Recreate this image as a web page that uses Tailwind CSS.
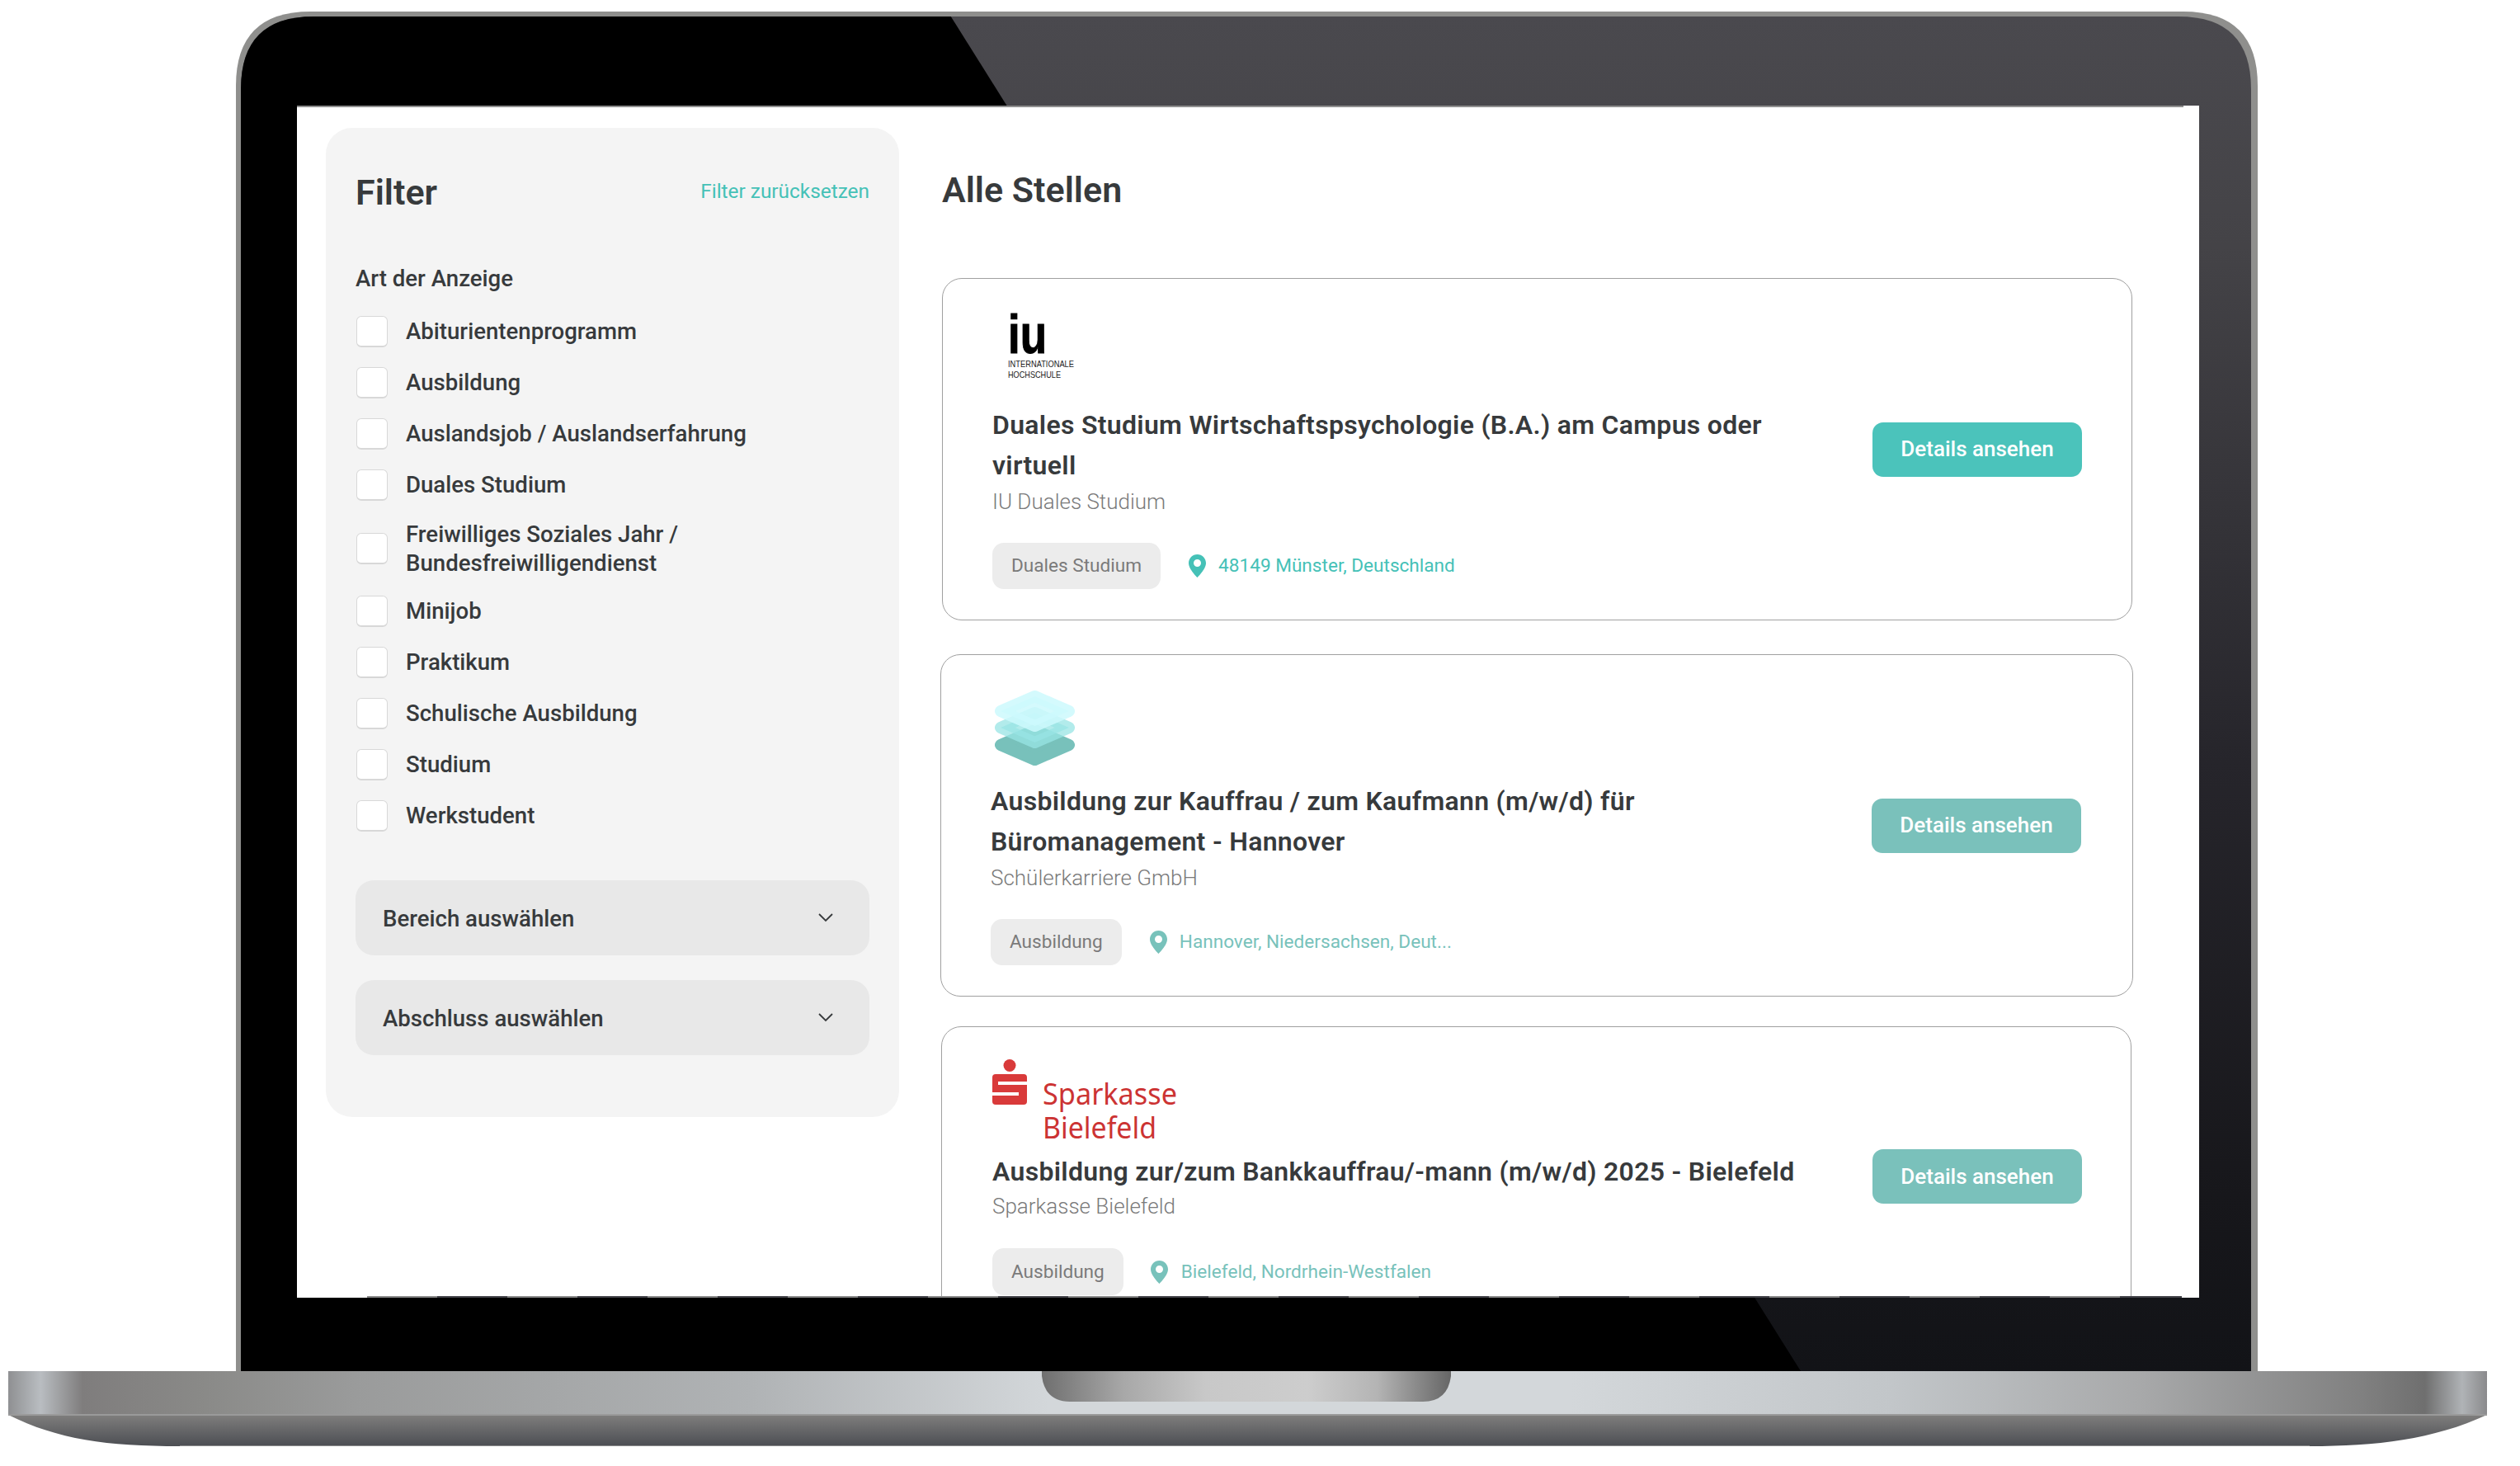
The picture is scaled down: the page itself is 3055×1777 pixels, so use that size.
<!DOCTYPE html>
<html lang="de">
<head>
<meta charset="utf-8">
<title>Alle Stellen</title>
<script src="https://cdn.jsdelivr.net/npm/@tailwindcss/browser@4"></script>
</head>
<body class="bg-white">
<div class="relative w-[3055px] h-[1777px] overflow-hidden bg-white font-[Roboto,sans-serif] text-[#373a3c]">

  <!-- laptop body -->
  <svg class="absolute inset-0" width="3055" height="1777" viewBox="0 0 3055 1777" xmlns="http://www.w3.org/2000/svg">
    <defs>
      <linearGradient id="lidShade" gradientUnits="userSpaceOnUse" x1="0" y1="20" x2="0" y2="1662">
        <stop offset="0" stop-color="#4a494e"/>
        <stop offset="0.17" stop-color="#444347"/>
        <stop offset="0.55" stop-color="#26252b"/>
        <stop offset="0.87" stop-color="#17171b"/>
        <stop offset="1" stop-color="#121317"/>
      </linearGradient>
      <linearGradient id="baseTop" gradientUnits="userSpaceOnUse" x1="10" y1="0" x2="3015" y2="0">
        <stop offset="0" stop-color="#8f9092"/>
        <stop offset="0.013" stop-color="#b9bdc1"/>
        <stop offset="0.03" stop-color="#7f7d7d"/>
        <stop offset="0.08" stop-color="#8a8a88"/>
        <stop offset="0.14" stop-color="#9a9b9b"/>
        <stop offset="0.3" stop-color="#b0b3b5"/>
        <stop offset="0.42" stop-color="#d3d7da"/>
        <stop offset="0.63" stop-color="#d3d7da"/>
        <stop offset="0.76" stop-color="#c2c6c9"/>
        <stop offset="0.86" stop-color="#a8a9aa"/>
        <stop offset="0.95" stop-color="#808080"/>
        <stop offset="0.975" stop-color="#6f6f6f"/>
        <stop offset="0.99" stop-color="#b0b3b6"/>
        <stop offset="1" stop-color="#8a8a8c"/>
      </linearGradient>
      <linearGradient id="baseBottom" gradientUnits="userSpaceOnUse" x1="0" y1="1715" x2="0" y2="1752">
        <stop offset="0" stop-color="#7f7e7d"/>
        <stop offset="1" stop-color="#4d4f54"/>
      </linearGradient>
      <linearGradient id="notch" gradientUnits="userSpaceOnUse" x1="1263" y1="0" x2="1759" y2="0">
        <stop offset="0" stop-color="#6f6f6f"/>
        <stop offset="0.2" stop-color="#a8a8a8"/>
        <stop offset="0.4" stop-color="#c8c8c8"/>
        <stop offset="0.65" stop-color="#cdcdcd"/>
        <stop offset="0.82" stop-color="#b4b4b4"/>
        <stop offset="1" stop-color="#666666"/>
      </linearGradient>
      <clipPath id="lidInner">
        <path d="M292 1662V108Q292 20 380 20H2641Q2729 20 2729 108V1662Z"/>
      </clipPath>
    </defs>
    <path d="M286 1662V104Q286 14 376 14H2647Q2737 14 2737 104V1662Z" fill="#8f8f8d"/>
    <path d="M292 1662V108Q292 20 380 20H2641Q2729 20 2729 108V1662Z" fill="url(#lidShade)"/>
    <polygon points="286,14 1149,14 2183,1662 286,1662" fill="#000000" clip-path="url(#lidInner)"/>
    <rect x="10" y="1662" width="3005" height="53" fill="url(#baseTop)"/>
    <path d="M1263 1662H1759V1668Q1755 1699 1725 1699H1297Q1267 1699 1263 1668Z" fill="url(#notch)"/>
    <path d="M10 1715H3015C2950 1745 2880 1753 2800 1753H218C130 1753 70 1745 10 1715Z" fill="url(#baseBottom)"/>
    <rect x="10" y="1714" width="3005" height="2" fill="#9a9a9a"/>
    <rect x="218" y="1752" width="2582" height="1" fill="#8a8a8a"/>
  </svg>

  <!-- screen -->
  <div class="absolute left-[360px] top-[128px] w-[2306px] h-[1445px] overflow-hidden bg-white flex items-start pl-[35px] pt-[27px] gap-[52px]">

    <!-- filter panel -->
    <aside class="w-[695px] h-[1199px] shrink-0 rounded-[32px] bg-[#f4f4f4] pl-[37px] pr-[36px] pt-[51px]">
      <div class="flex items-center justify-between h-[52px]">
        <h2 class="text-[43px] leading-[52px] font-semibold -ml-[1px] pt-[2px]">Filter</h2>
        <a class="text-[24.4px] text-[#45c1b7]">Filter zurücksetzen</a>
      </div>
      <h3 class="mt-[60px] text-[27.6px] leading-[40px] font-medium -ml-[1px]">Art der Anzeige</h3>
      <div class="mt-[25px] flex flex-col gap-[24px] text-[27.6px] font-medium">
        <label class="flex items-center gap-[22px] h-[38px]"><span class="w-[38px] h-[38px] shrink-0 rounded-[6px] bg-white border border-[#d8d8d8] border-b-2"></span>Abiturientenprogramm</label>
        <label class="flex items-center gap-[22px] h-[38px]"><span class="w-[38px] h-[38px] shrink-0 rounded-[6px] bg-white border border-[#d8d8d8] border-b-2"></span>Ausbildung</label>
        <label class="flex items-center gap-[22px] h-[38px]"><span class="w-[38px] h-[38px] shrink-0 rounded-[6px] bg-white border border-[#d8d8d8] border-b-2"></span>Auslandsjob / Auslandserfahrung</label>
        <label class="flex items-center gap-[22px] h-[38px]"><span class="w-[38px] h-[38px] shrink-0 rounded-[6px] bg-white border border-[#d8d8d8] border-b-2"></span>Duales Studium</label>
        <label class="flex items-center gap-[22px] h-[67px] leading-[35px]"><span class="w-[38px] h-[38px] shrink-0 rounded-[6px] bg-white border border-[#d8d8d8] border-b-2"></span><span>Freiwilliges Soziales Jahr /<br>Bundesfreiwilligendienst</span></label>
        <label class="flex items-center gap-[22px] h-[38px]"><span class="w-[38px] h-[38px] shrink-0 rounded-[6px] bg-white border border-[#d8d8d8] border-b-2"></span>Minijob</label>
        <label class="flex items-center gap-[22px] h-[38px]"><span class="w-[38px] h-[38px] shrink-0 rounded-[6px] bg-white border border-[#d8d8d8] border-b-2"></span>Praktikum</label>
        <label class="flex items-center gap-[22px] h-[38px]"><span class="w-[38px] h-[38px] shrink-0 rounded-[6px] bg-white border border-[#d8d8d8] border-b-2"></span>Schulische Ausbildung</label>
        <label class="flex items-center gap-[22px] h-[38px]"><span class="w-[38px] h-[38px] shrink-0 rounded-[6px] bg-white border border-[#d8d8d8] border-b-2"></span>Studium</label>
        <label class="flex items-center gap-[22px] h-[38px]"><span class="w-[38px] h-[38px] shrink-0 rounded-[6px] bg-white border border-[#d8d8d8] border-b-2"></span>Werkstudent</label>
      </div>
      <div class="mt-[59px] flex flex-col gap-[30px] -ml-[1px] text-[27.6px] font-medium">
        <div class="flex items-center justify-between h-[91px] rounded-[22px] bg-[#e8e8e8] pl-[33px] pr-[44px]">
          <span class="pt-[2px]">Bereich auswählen</span>
          <svg width="18" height="11" viewBox="0 0 18 11" fill="none" stroke="#373a3c" stroke-width="1.8"><path d="M1 1l8 8 8-8"/></svg>
        </div>
        <div class="flex items-center justify-between h-[91px] rounded-[22px] bg-[#e8e8e8] pl-[33px] pr-[44px]">
          <span class="pt-[2px]">Abschluss auswählen</span>
          <svg width="18" height="11" viewBox="0 0 18 11" fill="none" stroke="#373a3c" stroke-width="1.8"><path d="M1 1l8 8 8-8"/></svg>
        </div>
      </div>
    </aside>

    <!-- job list -->
    <main class="w-[1443px] shrink-0">
      <h1 class="text-[43px] leading-[52px] font-semibold mt-[49px]">Alle Stellen</h1>

      <article class="mt-[81px] w-[1443px] rounded-[24px] border border-[#a0a0a0] flex items-center justify-between pl-[60px] pr-[60px]">
        <div class="w-[1000px]">
          <svg class="ml-[19px] mt-[24px]" width="110" height="100" viewBox="0 0 110 100" xmlns="http://www.w3.org/2000/svg">
            <text x="0" y="66" font-family="Liberation Sans" font-weight="700" font-size="66" textLength="47" lengthAdjust="spacingAndGlyphs" fill="#000" stroke="#000" stroke-width="1">iu</text>
            <text x="0" y="83" font-family="Liberation Sans" font-size="10.5" textLength="80" lengthAdjust="spacingAndGlyphs" fill="#222">INTERNATIONALE</text>
            <text x="0" y="96" font-family="Liberation Sans" font-size="10.5" textLength="64" lengthAdjust="spacingAndGlyphs" fill="#222">HOCHSCHULE</text>
          </svg>
          <h2 class="mt-[29px] text-[32px] leading-[49px] font-semibold tracking-[0.3px]">Duales Studium Wirtschaftspsychologie (B.A.) am Campus oder virtuell</h2>
          <p class="text-[26px] leading-[38px] text-[#7a7a7a] font-light">IU Duales Studium</p>
          <div class="mt-[31px] mb-[37px] flex items-center">
            <span class="h-[56px] flex items-center rounded-[14px] bg-[#ececec] px-[23px] text-[22.6px] text-[#7a7a7a]">Duales Studium</span>
            <svg class="ml-[34px]" width="21" height="28" viewBox="0 0 21 28"><path fill="#45c1b7" fill-rule="evenodd" d="M10.5 0C4.7 0 0 4.7 0 10.5 0 18 10.5 28 10.5 28S21 18 21 10.5C21 4.7 16.3 0 10.5 0zm0 6a4.5 4.5 0 1 1 0 9 4.5 4.5 0 0 1 0-9z"/></svg>
            <span class="ml-[15px] text-[22.6px] text-[#45c1b7]">48149 Münster, Deutschland</span>
          </div>
        </div>
        <a class="w-[254px] h-[66px] shrink-0 flex items-center justify-center rounded-[13px] bg-[#4bc3bb] text-white text-[26px] font-medium">Details ansehen</a>
      </article>

      <article class="mt-[41px] -ml-[2px] w-[1446px] rounded-[24px] border border-[#a0a0a0] flex items-center justify-between pl-[60px] pr-[62px]">
        <div class="w-[1000px]">
          <svg class="ml-[5px] mt-[43px]" width="97" height="91" viewBox="0 0 97 91" xmlns="http://www.w3.org/2000/svg">
            <polygon points="48.5,48 90,66 48.5,84 7,66" fill="#78c1bb" stroke="#78c1bb" stroke-width="14" stroke-linejoin="round"/>
            <polygon points="48.5,27 90,45 48.5,63 7,45" fill="#98e4e4" fill-opacity="0.75"/>
            <polygon points="48.5,27 90,45 48.5,63 7,45" fill="none" stroke="#98e4e4" stroke-opacity="0.75" stroke-width="14" stroke-linejoin="round"/>
            <polygon points="48.5,7 90,25 48.5,43 7,25" fill="#ccf9fd" fill-opacity="0.85"/>
            <polygon points="48.5,7 90,25 48.5,43 7,25" fill="none" stroke="#ccf9fd" stroke-opacity="0.85" stroke-width="14" stroke-linejoin="round"/>
          </svg>
          <h2 class="mt-[19px] text-[32px] leading-[49px] font-semibold tracking-[0.3px]">Ausbildung zur Kauffrau / zum Kaufmann (m/w/d) für Büromanagement - Hannover</h2>
          <p class="text-[26px] leading-[38px] text-[#7a7a7a] font-light">Schülerkarriere GmbH</p>
          <div class="mt-[31px] mb-[37px] flex items-center">
            <span class="h-[56px] flex items-center rounded-[14px] bg-[#ececec] px-[23px] text-[22.6px] text-[#7a7a7a]">Ausbildung</span>
            <svg class="ml-[34px]" width="21" height="28" viewBox="0 0 21 28"><path fill="#78c2bb" fill-rule="evenodd" d="M10.5 0C4.7 0 0 4.7 0 10.5 0 18 10.5 28 10.5 28S21 18 21 10.5C21 4.7 16.3 0 10.5 0zm0 6a4.5 4.5 0 1 1 0 9 4.5 4.5 0 0 1 0-9z"/></svg>
            <span class="ml-[15px] text-[22.6px] text-[#78c2bb]">Hannover, Niedersachsen, Deut...</span>
          </div>
        </div>
        <a class="w-[254px] h-[66px] shrink-0 flex items-center justify-center rounded-[13px] bg-[#7ac1bb] text-white text-[26px] font-medium">Details ansehen</a>
      </article>

      <article class="mt-[36px] -ml-[1px] w-[1443px] rounded-[24px] border border-[#a0a0a0] flex items-center justify-between pl-[61px] pr-[59px]">
        <div class="w-[1010px]">
          <svg class="mt-[39px]" width="240" height="112" viewBox="0 0 240 112" xmlns="http://www.w3.org/2000/svg">
            <circle cx="21" cy="7.5" r="7.5" fill="#d93a3a"/>
            <rect x="0" y="18" width="42" height="37" rx="4" fill="#d93a3a"/>
            <rect x="7" y="27" width="35" height="4" fill="#fff"/>
            <rect x="0" y="40" width="32" height="4" fill="#fff"/>
            <text x="61" y="55" font-family="Noto Sans" font-size="36" textLength="163" lengthAdjust="spacingAndGlyphs" fill="#cc3333">Sparkasse</text>
            <text x="61" y="96" font-family="Noto Sans" font-size="36" textLength="138" lengthAdjust="spacingAndGlyphs" fill="#cc3333">Bielefeld</text>
          </svg>
          <h2 class="text-[32px] leading-[49px] font-semibold tracking-[0.3px]">Ausbildung zur/zum Bankkauffrau/-mann (m/w/d) 2025 - Bielefeld</h2>
          <p class="-mt-[2px] text-[26px] leading-[38px] text-[#7a7a7a] font-light">Sparkasse Bielefeld</p>
          <div class="mt-[32px] mb-[37px] flex items-center">
            <span class="h-[57px] flex items-center rounded-[14px] bg-[#ececec] px-[23px] text-[22.6px] text-[#7a7a7a]">Ausbildung</span>
            <svg class="ml-[33px]" width="21" height="28" viewBox="0 0 21 28"><path fill="#78c2bb" fill-rule="evenodd" d="M10.5 0C4.7 0 0 4.7 0 10.5 0 18 10.5 28 10.5 28S21 18 21 10.5C21 4.7 16.3 0 10.5 0zm0 6a4.5 4.5 0 1 1 0 9 4.5 4.5 0 0 1 0-9z"/></svg>
            <span class="ml-[16px] text-[22.6px] text-[#78c2bb]">Bielefeld, Nordrhein-Westfalen</span>
          </div>
        </div>
        <a class="w-[254px] h-[66px] shrink-0 flex items-center justify-center rounded-[13px] bg-[#7ac1bb] text-white text-[26px] font-medium">Details ansehen</a>
      </article>
    </main>

    <!-- seams of the mockup along the screen edges -->
    <div class="absolute left-0 top-0 w-[2287px] h-[2px] bg-[#8f8f8f]"></div>
    <div class="absolute left-[85px] bottom-0 w-[2200px] h-[2px] bg-[repeating-linear-gradient(90deg,#8a8a8a_0,#8a8a8a_85px,#44444a_85px,#44444a_170px)]"></div>
  </div>
</div>
</body>
</html>
